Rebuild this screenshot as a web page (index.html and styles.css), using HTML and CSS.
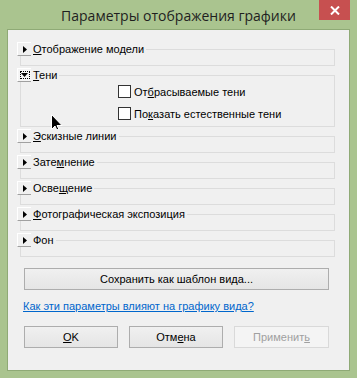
FILE: index.html
```html
<!DOCTYPE html>
<html lang="ru">
<head>
    <meta charset="UTF-8">
    <title>Параметры отображения графики</title>
    <link rel="stylesheet" href="styles.css">
</head>
<body>
    <div class="window">
        <div class="titlebar">
            <span></span>
            <span class="title">Параметры отображения графики</span>
            <span class="close">
                <svg width="10" height="9" viewBox="0 0 10 9">
                    <path d="M1 0.5 L9 8.5 M9 0.5 L1 8.5" stroke="#fff" stroke-width="2"/>
                </svg>
            </span>
        </div>

        <div class="client">
            <div class="sections">
                <div class="section">
                    <div class="header">
                        <span class="expander"><svg width="4" height="7" viewBox="0 0 4 7"><polygon points="0,0 4,3.5 0,7" fill="#000"/></svg></span>
                        <span class="caption"><u>О</u>тображение модели</span>
                    </div>
                    <div class="box"></div>
                </div>

                <div class="section">
                    <div class="header">
                        <span class="expander open"><span class="focus"><svg width="7" height="5" viewBox="0 0 7 5"><polygon points="0,0 7,0 3.5,4" fill="#000"/></svg></span></span>
                        <span class="caption"><u>Т</u>ени</span>
                    </div>
                    <div class="box box-open">
                        <label class="check"><span class="checkbox"></span><span>От<u>б</u>расываемые тени</span></label>
                        <label class="check"><span class="checkbox"></span><span>По<u>к</u>азать естественные тени</span></label>
                    </div>
                </div>

                <div class="section">
                    <div class="header">
                        <span class="expander"><svg width="4" height="7" viewBox="0 0 4 7"><polygon points="0,0 4,3.5 0,7" fill="#000"/></svg></span>
                        <span class="caption"><u>Э</u>скизные линии</span>
                    </div>
                    <div class="box"></div>
                </div>

                <div class="section">
                    <div class="header">
                        <span class="expander"><svg width="4" height="7" viewBox="0 0 4 7"><polygon points="0,0 4,3.5 0,7" fill="#000"/></svg></span>
                        <span class="caption">Зате<u>м</u>нение</span>
                    </div>
                    <div class="box"></div>
                </div>

                <div class="section">
                    <div class="header">
                        <span class="expander"><svg width="4" height="7" viewBox="0 0 4 7"><polygon points="0,0 4,3.5 0,7" fill="#000"/></svg></span>
                        <span class="caption">Осве<u>щ</u>ение</span>
                    </div>
                    <div class="box"></div>
                </div>

                <div class="section">
                    <div class="header">
                        <span class="expander"><svg width="4" height="7" viewBox="0 0 4 7"><polygon points="0,0 4,3.5 0,7" fill="#000"/></svg></span>
                        <span class="caption"><u>Ф</u>отографическая экспозиция</span>
                    </div>
                    <div class="box"></div>
                </div>

                <div class="section">
                    <div class="header">
                        <span class="expander"><svg width="4" height="7" viewBox="0 0 4 7"><polygon points="0,0 4,3.5 0,7" fill="#000"/></svg></span>
                        <span class="caption">Фон</span>
                    </div>
                    <div class="box"></div>
                </div>
            </div>

            <button class="btn btn-wide">Сохранить как шаблон вида...</button>

            <a class="help" href="#">Как эти параметры влияют на графику вида?</a>

            <div class="actions">
                <button class="btn"><u>О</u>K</button>
                <button class="btn">Отм<u>е</u>на</button>
                <button class="btn" disabled>Применит<u>ь</u></button>
            </div>
        </div>

        <!-- mouse pointer -->
        <svg class="cursor" width="12" height="19" viewBox="0 0 12 19">
            <path d="M0.5 0.5 L0.5 15.5 L4 12 L6.5 17.5 L8.5 16.5 L6 11.5 L11 11.5 Z" fill="#000" stroke="#fff" stroke-width="1"/>
        </svg>
    </div>
</body>
</html>
```

FILE: styles.css
```css
* {
    margin: 0;
    padding: 0;
    box-sizing: border-box;
}

body {
    background: #aac48f;
    font-family: 'Liberation Sans', Arial, sans-serif;
    font-size: 11px;
    color: #000;
}

.window {
    position: relative;
    width: 357px;
    height: 378px;
    padding: 0 7px 7px 7px;
    background: #aac48f;
}

.titlebar {
    display: grid;
    grid-template-columns: 1fr auto 1fr;
    height: 29px;
}

.title {
    font-family: 'Open Sans', 'Noto Sans', sans-serif;
    font-size: 14px;
    line-height: 29px;
    color: #1f1f1f;
    padding-top: 1px;
}

.close {
    justify-self: end;
    width: 31px;
    height: 20px;
    background: #c75050;
    display: flex;
    align-items: center;
    justify-content: center;
}

.close svg {
    display: block;
}

.client {
    height: 342px;
    background: #f0f0f0;
    border: 1px solid #8faa76;
    padding: 12px 0 0 0;
}

.sections {
    padding: 0 14px 0 9px;
}

.section {
    margin-bottom: 2px;
}

.header {
    position: relative;
    z-index: 1;
    display: flex;
    align-items: center;
    height: 14px;
}

.expander {
    width: 14px;
    height: 14px;
    background: #f0f0f0;
    border-top: 1px solid #fff;
    border-left: 1px solid #fff;
    border-bottom: 1px solid #a0a0a0;
    display: flex;
    align-items: center;
    justify-content: center;
}

.expander svg {
    display: block;
}

.expander.open {
    background: #f5f5f5;
}

.focus {
    width: 10px;
    height: 8px;
    border: 1px dotted #000;
    display: flex;
    align-items: center;
    justify-content: center;
}

.caption {
    background: #f0f0f0;
    padding: 0 2px 0 2px;
    line-height: 14px;
}

.box {
    height: 17px;
    margin: -7px 0 0 3px;
    border: 1px solid #dcdcdc;
}

.box-open {
    height: 52px;
    padding: 9px 0 0 97px;
    display: flex;
    flex-direction: column;
    gap: 9px;
}

.check {
    display: flex;
    align-items: center;
    gap: 3px;
    height: 13px;
}

.checkbox {
    width: 13px;
    height: 13px;
    background: #fff;
    border: 1px solid #333;
}

.btn {
    font-family: 'Liberation Sans', Arial, sans-serif;
    font-size: 11px;
    color: #000;
    height: 22px;
    border: 1px solid #adadad;
    background: linear-gradient(#f0f0f0, #e5e5e5);
}

.btn:disabled {
    color: #a0a0a0;
    border-color: #d9d9d9;
    background: #f4f4f4;
}

.btn-wide {
    display: block;
    width: 305px;
    margin: 11px 0 0 16px;
}

.help {
    display: block;
    margin: 10px 0 0 15px;
    color: #0066cc;
    line-height: 13px;
}

.actions {
    display: grid;
    grid-template-columns: 94px 94px 95px;
    gap: 11px;
    margin: 13px 0 0 16px;
}

.cursor {
    position: absolute;
    left: 51px;
    top: 114px;
}
```
